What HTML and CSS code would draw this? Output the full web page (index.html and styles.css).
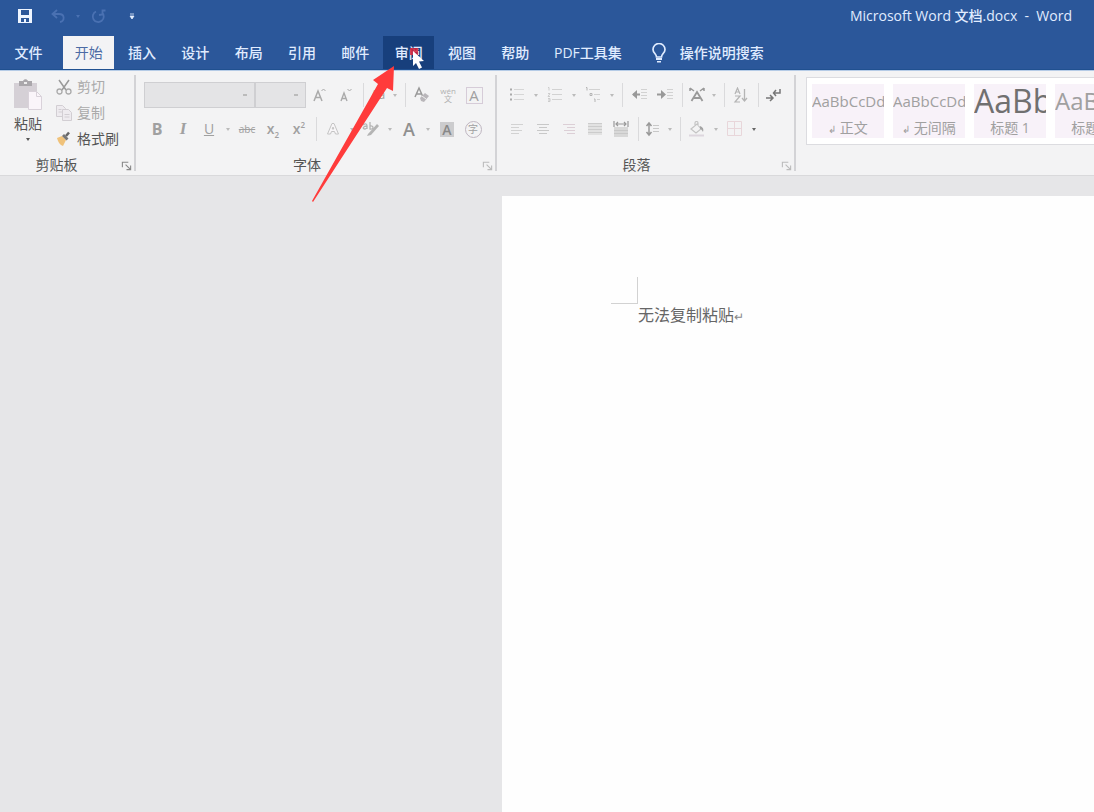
FILE: index.html
```html
<!DOCTYPE html>
<html lang="zh-CN">
<head>
<meta charset="utf-8">
<meta name="viewport" content="width=device-width, initial-scale=1">
<title>Microsoft Word 文档.docx - Word</title>
<link rel="stylesheet" href="styles.css">
</head>
<body>
<svg class="defs" aria-hidden="true">
  <symbol id="launcher" viewBox="0 0 12 12"><path d="M1.500 8V2.500H8M5 5l5 5M10.500 6v4.500H6" fill="none" stroke="currentColor" stroke-width="1.200"/></symbol>
</svg>

<header class="window-head">
  <div class="title-bar">
    <div class="quick-access">
      <button class="quick quick-save" aria-label="保存"><svg width="14" height="14" viewBox="0 0 14 14"><path d="M0 0h14v14H0z" fill="#eef5ff"/><path d="M3 1h8v5H3zM3 9h8v4H8v-3H6v3H3z" fill="#2b579a"/></svg></button>
      <button class="quick" aria-label="撤消"><svg width="14" height="14" viewBox="0 0 14 14"><path d="M6 1L1.500 5 6 9M2 5h6c6 0 6 7 1 8" fill="none" stroke="currentColor" stroke-width="1.800"/></svg></button>
      <button class="quick quick-more" aria-label="撤消选项"><span class="caret"></span></button>
      <button class="quick" aria-label="重复"><svg width="15" height="15" viewBox="0 0 15 15"><path d="M5 2.500a5.500 5.500 0 1 0 6 1M8 6l3.500-.5V1.500h3" fill="none" stroke="currentColor" stroke-width="1.800"/></svg></button>
      <button class="quick quick-menu" aria-label="自定义快速访问工具栏"><svg width="6" height="7" viewBox="0 0 6 7"><path d="M1 1h4M1 3h4L3 6z" fill="currentColor" stroke="currentColor" stroke-width=".8"/></svg></button>
    </div>
    <h1 class="title">Microsoft Word 文档.docx&nbsp; -&nbsp; Word</h1>
  </div>
  <nav class="tab-bar" aria-label="功能区">
    <button class="tab tab-file">文件</button>
    <div class="tabs">
      <button class="tab tab-active">开始</button>
      <button class="tab">插入</button>
      <button class="tab">设计</button>
      <button class="tab">布局</button>
      <button class="tab">引用</button>
      <button class="tab">邮件</button>
      <button class="tab tab-hover">审阅</button>
      <button class="tab">视图</button>
      <button class="tab">帮助</button>
    </div>
    <button class="tab tab-pdf">PDF工具集</button>
    <button class="tab tab-tell"><svg width="14" height="20" viewBox="0 0 14 20"><path d="M4.500 14c0-3-3.500-4-3.500-7.500a6 6 0 0 1 12 0c0 3.500-3.500 4.500-3.500 7.500z" fill="none" stroke="currentColor" stroke-width="1.700"/><path d="M4 15h6v2H4zM5 18h4v1.500H5z" fill="currentColor"/></svg>操作说明搜索</button>
  </nav>
</header>

<section class="ribbon">
  <div class="group group-clipboard">
    <div class="clipboard">
      <button class="paste">
        <svg width="30" height="32" viewBox="0 0 30 32"><path d="M1 4h23v25H1z" fill="#d5d0d6"/><path d="M6 2h4c1-2.500 4-2.500 5 0h4v5H6z" fill="#aaa7ab"/><path d="M11 3h3v2h-3z" fill="#eee"/><path d="M15.500 12.500h8l5 5v13h-13z" fill="#faf5fa" stroke="#d9d2da"/><path d="M23.500 12.500v5h5" fill="none" stroke="#d9d2da"/></svg>
        <span>粘贴</span>
        <span class="caret"></span>
      </button>
      <div class="clip-list">
        <button class="clip"><svg width="16" height="16" viewBox="0 0 16 16"><path d="M3 1l7 10M13 1L6 11" fill="none" stroke="#999" stroke-width="1.500"/><circle cx="3.500" cy="12.500" r="2.500" fill="none" stroke="#aaa" stroke-width="1.300"/><circle cx="12.500" cy="12.500" r="2.500" fill="none" stroke="#aaa" stroke-width="1.300"/></svg>剪切</button>
        <button class="clip"><svg width="16" height="16" viewBox="0 0 16 16" fill="#eeebef" stroke="#d2ced3"><path d="M.5.500h6l3 3v8h-9zM2.500 4.500h3M2.500 7h4"/><path d="M6.500 4.500h6l3 3v8h-9z"/><path d="M8.500 9.500h5M8.500 12h5"/></svg>复制</button>
        <button class="clip clip-on"><svg width="16" height="16" viewBox="0 0 16 16"><path d="M1 7l5-2 4 4-3 6C4 14 2 11 1 7z" fill="#f0c27a"/><path d="M6 5l2-2 4.500 4.500-2 2z" fill="#777"/><path d="M10 5l3-3.500" stroke="#666" stroke-width="2.500"/></svg>格式刷</button>
      </div>
    </div>
    <div class="group-foot"><span>剪贴板</span><button class="launcher launcher-on" aria-label="剪贴板设置"><svg width="11" height="11"><use href="#launcher"/></svg></button></div>
  </div>

  <div class="group group-font">
    <div class="row">
      <div class="boxes">
        <select class="box box-name" aria-label="字体名称"><option></option></select>
        <select class="box box-size" aria-label="字号"><option></option></select>
      </div>
      <button class="tool" aria-label="增大字号"><svg width="16" height="16" viewBox="0 0 16 16" fill="none" stroke="#aaa"><path d="M2 14L6 4l4 10M3.500 10.500h5" stroke-width="1.500"/><path d="M9.500 4l2-2 2 2"/></svg></button>
      <button class="tool" aria-label="减小字号"><svg width="16" height="16" viewBox="0 0 16 16" fill="none" stroke="#aaa"><path d="M3 14l3-8 3 8M4 11.500h4" stroke-width="1.400"/><path d="M9.500 2l2 2 2-2"/></svg></button>
      <span class="sep"></span>
      <button class="tool tool-slim" aria-label="更改大小写"><span class="glyph glyph-case">Aa</span></button>
      <button class="drop" aria-label="大小写选项"><span class="caret"></span></button>
      <span class="sep"></span>
      <button class="tool" aria-label="清除格式"><svg width="18" height="18" viewBox="0 0 18 18"><path d="M2 11L6 2l4 9M3.500 8h5" fill="none" stroke="#999" stroke-width="1.500"/><path d="M7 12l5-5 4 3-5 6-3-1z" fill="#b9b6ba"/><path d="M9 10l4 3" stroke="#eee"/></svg></button>
      <button class="tool" aria-label="拼音指南"><span class="pinyin"><span>wén</span><span>文</span></span></button>
      <button class="tool" aria-label="字符边框"><span class="framed">A</span></button>
    </div>
    <div class="row">
      <button class="tool" aria-label="加粗"><span class="glyph glyph-bold">B</span></button>
      <button class="tool" aria-label="倾斜"><span class="glyph glyph-italic">I</span></button>
      <button class="tool" aria-label="下划线"><span class="glyph glyph-under">U</span></button>
      <button class="drop" aria-label="下划线选项"><span class="caret"></span></button>
      <button class="tool" aria-label="删除线"><span class="glyph glyph-strike">abc</span></button>
      <button class="tool" aria-label="下标"><span class="glyph glyph-script">x<sub>2</sub></span></button>
      <button class="tool" aria-label="上标"><span class="glyph glyph-script">x<sup>2</sup></span></button>
      <span class="sep"></span>
      <button class="tool" aria-label="文本效果"><svg width="16" height="16" viewBox="0 0 16 16"><path d="M2.500 13L7 2.500h2L13.500 13h-3l-1-2.500h-3l-1 2.500zM7.200 8h1.600L8 6z" fill="#f8f6f8" stroke="#c4c4c4"/></svg></button>
      <button class="drop" aria-label="文本效果选项"><span class="caret"></span></button>
      <button class="tool" aria-label="突出显示"><svg width="20" height="18" viewBox="0 0 20 18"><path d="M2 5c3-2 4-1 4 1v3M6 6c-4 0-5 3-2 3l2-1M9 2v7c4 1 4-4 0-3" fill="none" stroke="#b4b4b4" stroke-width="1.300"/><path d="M7 14l9-10 2 2-8 9-4 1z" fill="#b4b4b4"/></svg></button>
      <button class="drop" aria-label="突出显示颜色"><span class="caret"></span></button>
      <button class="tool" aria-label="字体颜色"><span class="glyph glyph-color">A</span></button>
      <button class="drop" aria-label="字体颜色选项"><span class="caret"></span></button>
      <button class="tool" aria-label="字符底纹"><span class="shaded">A</span></button>
      <button class="tool" aria-label="带圈字符"><span class="circled">字</span></button>
    </div>
    <div class="group-foot"><span>字体</span><button class="launcher" aria-label="字体设置"><svg width="11" height="11"><use href="#launcher"/></svg></button></div>
  </div>

  <div class="group group-para">
    <div class="row">
      <button class="tool" aria-label="项目符号"><svg width="16" height="16" viewBox="0 0 16 16"><path d="M1 1.500h2v2H1zM1 6.500h2v2H1zM1 11.500h2v2H1z" fill="#aaa"/><path d="M5 2.500h10M5 7.500h10M5 12.500h10" stroke="#d6d6d6"/></svg></button>
      <button class="drop" aria-label="项目符号选项"><span class="caret"></span></button>
      <button class="tool" aria-label="编号"><svg width="16" height="16" viewBox="0 0 16 16"><path d="M1 .5h1v3M1 6.500h2L1 9.500h2M1 11.500h2v3H1M1 13h2" fill="none" stroke="#ccc"/><path d="M5 2.500h10M5 7.500h10M5 12.500h10" stroke="#d2d2d2"/></svg></button>
      <button class="drop" aria-label="编号选项"><span class="caret"></span></button>
      <button class="tool" aria-label="多级列表"><svg width="16" height="16" viewBox="0 0 16 16"><path d="M1 .5h1v3M5 6.500h2v2H5zM9 12h1v3" fill="none" stroke="#b4b4b4"/><path d="M4 2.500h11M9 7.500h6M12 12.500h3" stroke="#d2d2d2"/></svg></button>
      <button class="drop" aria-label="多级列表选项"><span class="caret"></span></button>
      <span class="sep"></span>
      <button class="tool" aria-label="减少缩进"><svg width="16" height="16" viewBox="0 0 16 16"><path d="M10 2.500h6M10 5.500h6M10 8.500h6M10 11.500h6" stroke="#d2d2d2"/><path d="M9 7.500H2" stroke="#999" stroke-width="2"/><path d="M6 3L1 7.500 6 12z" fill="#999"/></svg></button>
      <button class="tool" aria-label="增加缩进"><svg width="16" height="16" viewBox="0 0 16 16"><path d="M10 2.500h6M10 5.500h6M10 8.500h6M10 11.500h6" stroke="#d2d2d2"/><path d="M0 7.500h7" stroke="#999" stroke-width="2"/><path d="M4 3l5 4.500L4 12z" fill="#999"/></svg></button>
      <span class="sep"></span>
      <button class="tool tool-slim" aria-label="中文版式"><svg width="16" height="16" viewBox="0 0 16 16"><path d="M2.500 14L8 5l5.500 9M5 11h6" fill="none" stroke="#999" stroke-width="1.800"/><path d="M1 1l4 3M15 1l-4 3M1 1v3M15 1v3" stroke="#999" stroke-width="1.500"/></svg></button>
      <button class="drop" aria-label="中文版式选项"><span class="caret"></span></button>
      <span class="sep"></span>
      <button class="tool" aria-label="排序"><svg width="16" height="16" viewBox="0 0 16 16" fill="none" stroke="#b4b4b4"><path d="M2 7l2.500-6L7 7M3 5h3M2 9h5l-5 6h5" stroke-width="1.200"/><path d="M11.500 2v12M9 11l2.500 3 2.500-3" stroke-width="1.300"/></svg></button>
      <span class="sep"></span>
      <button class="tool tool-slim" aria-label="显示编辑标记"><svg width="16" height="16" viewBox="0 0 16 16" fill="none" stroke="#777"><path d="M15 2v4H9M11 3L8.500 6l2.500 3" stroke-width="1.500"/><path d="M1 11h7M5 8l3 3-3 3" stroke-width="1.500"/></svg></button>
    </div>
    <div class="row">
      <button class="tool" aria-label="左对齐"><svg width="14" height="14" viewBox="0 0 14 14"><path d="M1 2.500h12M1 5.500h8M1 8.500h11M1 11.500h8" stroke="#d2d2d2"/></svg></button>
      <button class="tool" aria-label="居中"><svg width="14" height="14" viewBox="0 0 14 14"><path d="M1 2.500h12M3 5.500h8M1 8.500h12M3 11.500h8" stroke="#c8c8c8"/></svg></button>
      <button class="tool" aria-label="右对齐"><svg width="14" height="14" viewBox="0 0 14 14"><path d="M1 2.500h12M5 5.500h8M2 8.500h11M5 11.500h8" stroke="#dccfd6"/></svg></button>
      <button class="tool" aria-label="两端对齐"><svg width="14" height="14" viewBox="0 0 14 14"><path d="M0 1h14v12H0z" fill="#e2e2e2"/><path d="M0 1.500h14M0 4.500h14M0 7.500h14M0 10.500h14" stroke="#ccc"/></svg></button>
      <button class="tool" aria-label="分散对齐"><svg width="16" height="16" viewBox="0 0 16 16"><path d="M1 6h14v10H1z" fill="#d8d8d8"/><path d="M1 9.500h14M1 12.500h14" stroke="#c8c8c8"/><path d="M1 0v6M15 0v6M3 3h10M5 1L3 3l2 2M11 1l2 2-2 2" fill="none" stroke="#999" stroke-width="1.200"/></svg></button>
      <span class="sep"></span>
      <button class="tool tool-slim" aria-label="行距"><svg width="16" height="16" viewBox="0 0 16 16"><path d="M4 2v12M1.500 5L4 2l2.500 3M1.500 11L4 14l2.500-3" fill="none" stroke="#999" stroke-width="1.500"/><path d="M8 4.500h6M8 7.500h6M8 10.500h6" stroke="#c8c8c8"/></svg></button>
      <button class="drop" aria-label="行距选项"><span class="caret"></span></button>
      <span class="sep"></span>
      <button class="tool" aria-label="底纹"><svg width="16" height="16" viewBox="0 0 16 16"><path d="M2 8l6-5 4 5-5 4zM6 5V2c0-2 3-2 3 0v3" fill="none" stroke="#c4c4c4" stroke-width="1.200"/><path d="M11 5c3 1 4 3 3 6-1-2-2-3-3-3z" fill="#a4a4a4"/><path d="M0 13.500h15v2H0z" fill="#ddd6de"/></svg></button>
      <button class="drop" aria-label="底纹颜色"><span class="caret"></span></button>
      <button class="tool" aria-label="边框"><svg width="16" height="16" viewBox="0 0 16 16"><path d="M.5.500h14v14H.500zM7.500.500v14M.5 7.500h14" fill="none" stroke="#e8d6da"/></svg></button>
      <button class="drop drop-on" aria-label="边框选项"><span class="caret"></span></button>
    </div>
    <div class="group-foot"><span>段落</span><button class="launcher" aria-label="段落设置"><svg width="11" height="11"><use href="#launcher"/></svg></button></div>
  </div>

  <div class="gallery">
    <button class="style"><span class="sample">AaBbCcDd</span><span class="style-name"><small>↲</small> 正文</span></button>
    <button class="style"><span class="sample">AaBbCcDd</span><span class="style-name"><small>↲</small> 无间隔</span></button>
    <button class="style"><span class="sample sample-h1">AaBb</span><span class="style-name">标题 1</span></button>
    <button class="style"><span class="sample sample-h2">AaBbC</span><span class="style-name">标题 2</span></button>
  </div>
</section>

<main class="workspace">
  <article class="sheet">
    <div class="crop-mark"></div>
    <p class="paragraph">无法复制粘贴<span class="return">↵</span></p>
  </article>
</main>

<svg class="pointer" width="16" height="24" viewBox="0 0 16 24" aria-hidden="true"><path d="M1 1h8v7H1z" fill="#d8233b" opacity=".85"/><path d="M4 4l11 10-5 .5 3 6-3 1.500-3-6-3 3z" fill="#fff"/></svg>
<svg class="arrow" width="84" height="136" viewBox="0 0 84 136" aria-hidden="true"><path d="M83 0L62 14l5 4L1 135l1 1L76 22l6 3z" fill="#ff3b3b"/></svg>
</body>
</html>
```
FILE: styles.css
```css
* { box-sizing: border-box; }

body {
  margin: 0;
  min-height: 100vh;
  display: flex;
  flex-direction: column;
  position: relative;
  overflow-x: hidden;
  background: #e6e6e8;
  color: #555;
  font: 14px/20px "Open Sans", "Noto Sans CJK SC", sans-serif;
}

button {
  margin: 0;
  padding: 0;
  border: 0;
  background: none;
  color: inherit;
  font: inherit;
}

.defs { display: none; }

/* Window head */
.window-head { background: #2b579a; color: #e0ecff; border-bottom: 1px solid #205090; }

.title-bar {
  height: 36px;
  padding: 0 22px 4px 16px;
  display: flex;
  align-items: center;
  justify-content: space-between;
}

.title { margin: 0; font-size: 14px; font-weight: 500; white-space: nowrap; }

.quick-access { display: flex; align-items: center; }
.quick { width: 26px; height: 20px; display: grid; place-items: center; color: #4a71b2; }
.quick-save { width: 18px; margin-right: 11px; }
.quick-more { width: 14px; }
.quick-menu { width: 14px; margin-left: 14px; color: #e6f0ff; }

.tab-bar { display: flex; height: 33px; }
.tabs { width: 480px; display: grid; grid-template-columns: repeat(9, 1fr); }
.tab { font-weight: 500; white-space: nowrap; }
.tab-file { width: 62px; padding-right: 5px; }
.tabs .tab { margin: 0 1px; }
.tab-active { background: #f3f3f5; color: #4c6ba5; font-weight: 400; }
.tab-hover { background: #173f7c; }
.tab-pdf { padding-left: 12px; }
.tab-tell { margin-left: 30px; display: flex; align-items: center; gap: 14px; }

/* Ribbon */
.ribbon {
  display: flex;
  background: #f3f3f4;
  border-top: 1px solid #b5cbe6;
  border-bottom: 1px solid #d9d9db;
  overflow: hidden;
}

.group { position: relative; flex: none; padding-top: 11px; }
.group::after {
  content: "";
  position: absolute;
  top: 4px;
  right: 0;
  bottom: 4px;
  width: 2px;
  background: #d3d3d6;
}
.group-clipboard { width: 136px; padding-top: 3px; }
.group-font { width: 361px; padding-left: 8px; }
.group-para { width: 299px; padding-left: 7px; }

.row { display: flex; align-items: center; height: 26px; margin-bottom: 8px; }

.group-foot { display: flex; height: 22px; align-items: center; text-align: center; padding-top: 2px; margin-top: 11px; }
.group-clipboard .group-foot { margin-top: 1px; }
.group-foot span { flex: 1; padding-right: 7px; }
.group-clipboard span { padding-right: 3px; }
.launcher { width: 20px; height: 14px; color: #bbb; display: grid; place-items: center; }
.launcher-on { color: #888; }

.caret, .group-clipboard .caret { width: 0; padding: 0; border: 2px solid transparent; border-top: 3px solid currentColor; border-bottom: 0; }

/* Clipboard */
.clipboard { display: flex; }
.paste { width: 56px; padding-top: 5px; display: flex; flex-direction: column; align-items: center; }
.paste span:nth-of-type(1) { margin: 3px 0 4px; padding: 0; }
.clip-list { display: flex; flex-direction: column; }
.clip { height: 26px; display: flex; align-items: center; gap: 5px; color: #aaa; white-space: nowrap; }
.clip-on { color: #555; }

/* Font and paragraph tools */
.boxes { display: flex; margin-right: 1px; }
.box {
  height: 26px;
  border: 1px solid #cfcfd2;
  border-radius: 0;
  appearance: none;
  background: #e4e4e6 linear-gradient(#bbb, #bbb) no-repeat right 7px center / 4px 2px;
}
.box-name { width: 111px; }
.box-size { width: 51px; }

.tool { width: 26px; height: 26px; display: grid; place-items: center; color: #a0a0a0; }
.tool-slim { width: 22px; }
.drop { width: 12px; height: 26px; display: grid; place-items: center; color: #bbb; }
.drop-on { color: #666; }
.sep { width: 8px; height: 24px; background: linear-gradient(#dadadc, #dadadc) no-repeat center / 1px 100%; }

.glyph { line-height: 20px; }
.glyph-case { font-size: 12px; }
.glyph-bold { font-size: 16px; font-weight: 700; }
.glyph-italic { font: italic 700 17px/20px "Liberation Serif", serif; }
.glyph-under { font-size: 14px; text-decoration: underline; }
.glyph-strike { font-size: 10px; text-decoration: line-through; }
.glyph-script { font-size: 14px; font-weight: 600; }
.glyph-script sub, .glyph-script sup { font-size: 8px; line-height: 8px; }
.glyph-color { font-size: 18px; font-weight: 600; color: #909090; }

.pinyin { display: flex; flex-direction: column; align-items: center; font-size: 8px; line-height: 8px; color: #b0b0b0; }
.framed { width: 17px; height: 17px; border: 1px solid #d6ccd8; font-size: 15px; line-height: 15px; }
.shaded { width: 14px; height: 15px; background: #ccccce; color: #888; font-weight: 600; line-height: 15px; }
.circled { width: 17px; height: 17px; border: 1px solid #bfb6c1; border-radius: 50%; font-size: 10px; line-height: 15px; }

/* Style gallery */
.gallery {
  flex: 1;
  min-width: 0;
  align-self: flex-start;
  margin: 6px 0 0 10px;
  padding: 6px 0 6px 5px;
  display: flex;
  gap: 9px;
  overflow: hidden;
  background: #fff;
  border: 1px solid #dcdce0;
  border-right: 0;
}
.style {
  flex: none;
  width: 72px;
  height: 54px;
  display: flex;
  flex-direction: column;
  overflow: hidden;
  background: #f8f2f9;
  color: #a0a0a0;
}
.sample { height: 34px; font-size: 15px; line-height: 34px; white-space: nowrap; }
.sample-h1 { font-size: 32px; font-weight: 500; color: #707070; }
.sample-h2 { font-size: 24px; }
.style-name { align-self: center; white-space: nowrap; }
.style-name small { font-size: 10px; }

/* Document */
.workspace { flex: 1; display: grid; grid-template-columns: 502px 1fr; padding-top: 20px; }
.sheet { grid-column: 2; background: #fefefe; padding: 81px 20px 20px 109px; }
.crop-mark { width: 27px; height: 27px; border: solid #d2d2d2; border-width: 0 1px 1px 0; }
.paragraph { margin: 0 0 0 27px; font: 400 16px/20px "Noto Sans CJK SC", sans-serif; color: #666; }
.return { font-size: 12px; color: #888; }

/* Pointer and callout lie over the window */
.pointer { position: absolute; left: 409px; top: 47px; }
.arrow { position: absolute; left: 311px; top: 66px; }
```
